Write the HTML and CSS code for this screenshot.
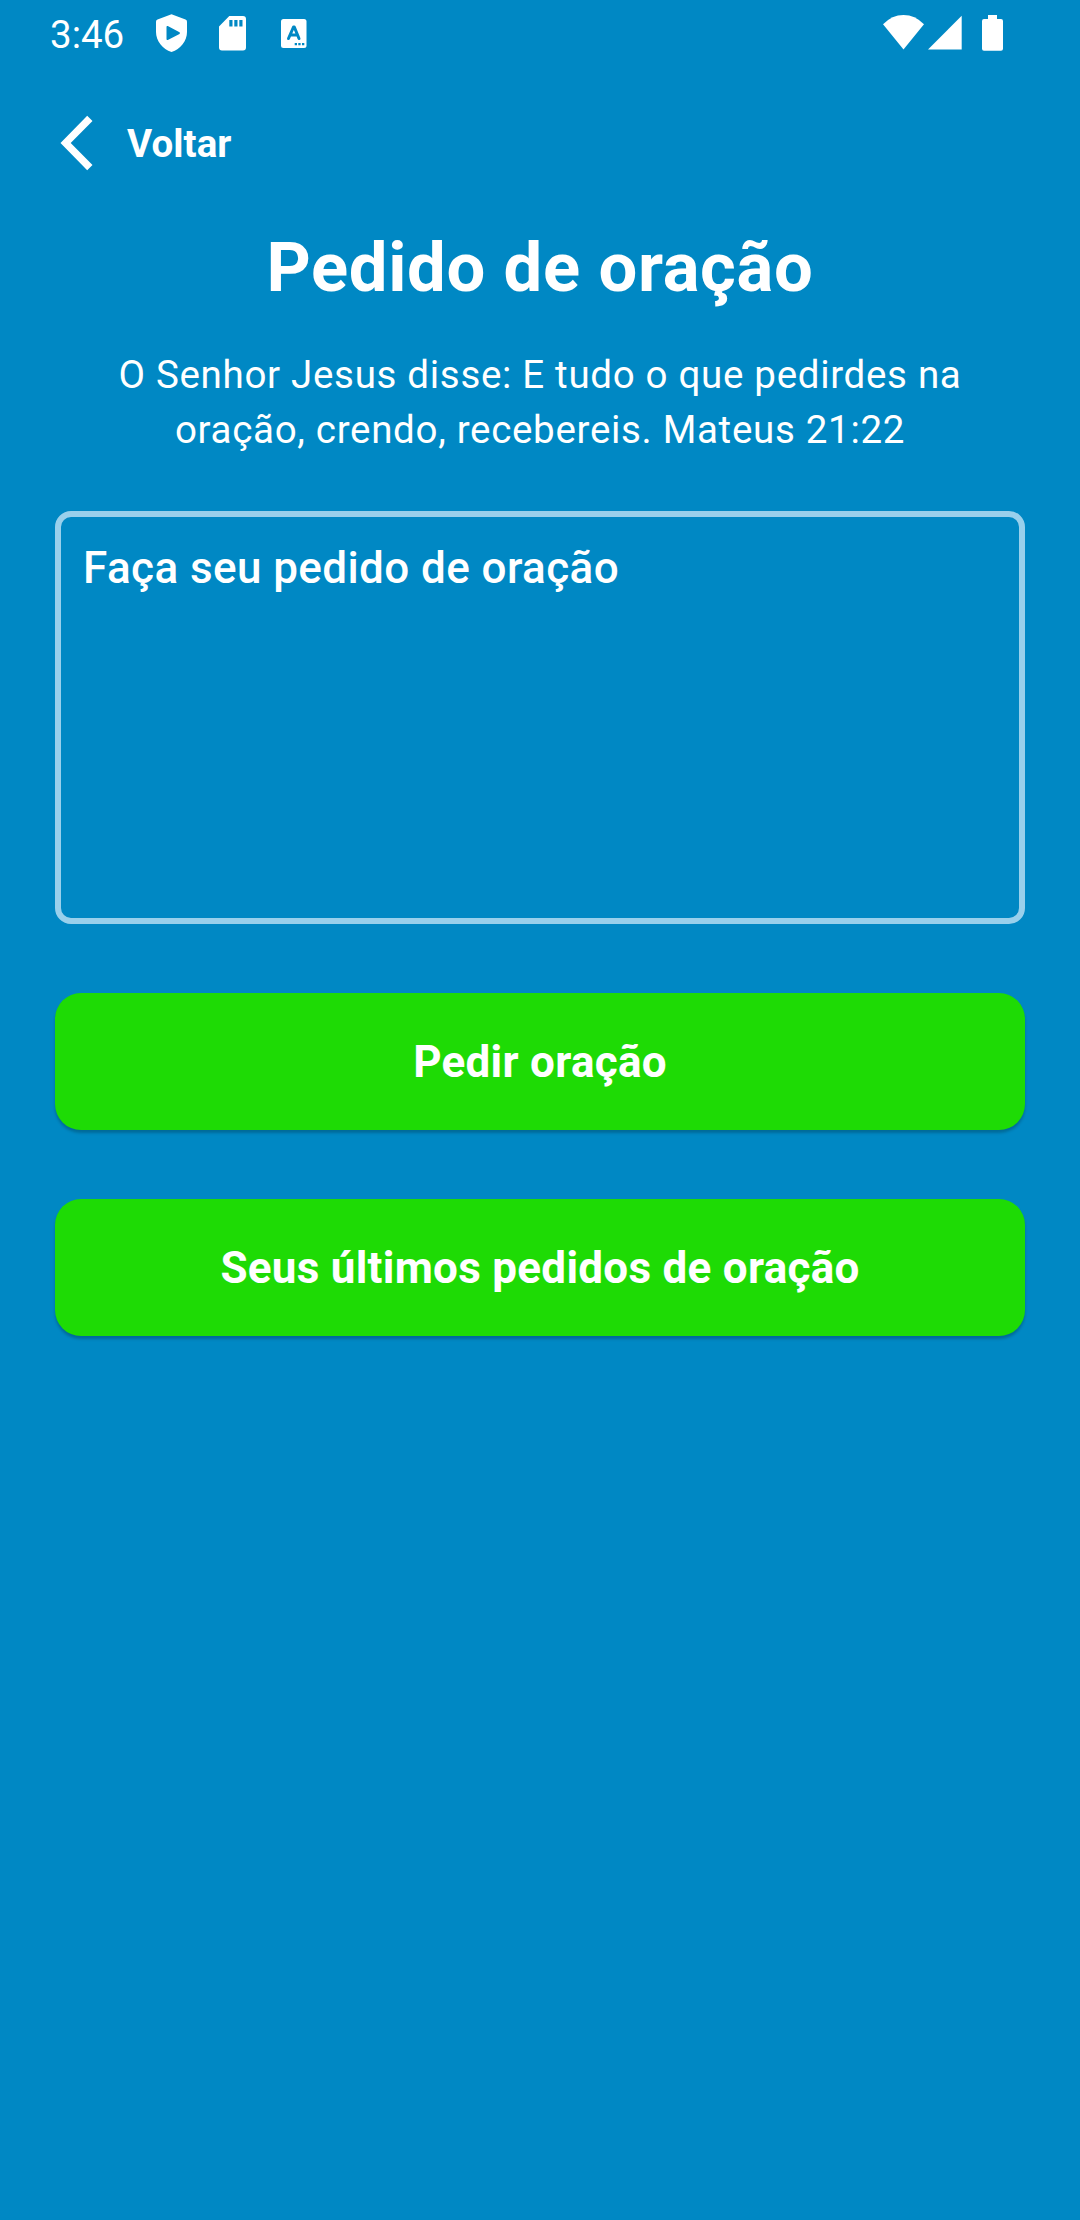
FILE: index.html
```html
<!DOCTYPE html>
<html lang="pt-BR">
<head>
    <meta charset="UTF-8">
    <meta name="viewport" content="width=device-width, initial-scale=1.0">
    <title>Pedido de oração</title>
    <link rel="stylesheet" href="styles.css">
</head>
<body>

<div class="status-bar">
    <span class="clock">3:46</span>
    <div class="status-icons">
        <svg class="shield" width="32" height="38" viewBox="0 0 32 38">
            <path fill="#fff" fill-rule="evenodd" d="M15.5 0.3 L29.5 5.5 Q31 6.1 31 7.8 V18 C31 27 24.5 35 15.5 38 C6.500 35 0 27 0 18 V7.800 Q0 6.100 1.500 5.500 Z M10.500 13 V25 Q10.500 26.500 11.800 25.900 L23.500 20 Q24.500 19 23.500 18.200 L11.800 12 Q10.500 11.500 10.500 13 Z"/>
        </svg>
        <svg class="sd-card" width="28" height="35" viewBox="0 0 28 35">
            <path fill="#fff" fill-rule="evenodd" d="M10.300 0 H24 Q27 0 27 3 V31.500 Q27 34.500 24 34.500 H3 Q0 34.500 0 31.500 V10.500 Z M10.300 4 V10.500 H13.500 V4 Z M15.300 4 V10.500 H18.500 V4 Z M20.300 4 V10.500 H23.500 V4 Z"/>
        </svg>
        <svg class="letter" width="26" height="30" viewBox="0 0 26 30">
            <rect fill="#fff" width="25.500" height="29" rx="2.500"/>
            <path fill="none" stroke="#0088c4" stroke-width="3" stroke-linecap="round" stroke-linejoin="round" d="M7.500 19.500 L12.500 8 H13.300 L18 19.500 M9.500 16 H16"/>
            <path fill="#0088c4" d="M13.700 24 H16 V26.300 H13.700 Z M17.300 24 H19.600 V26.300 H17.300 Z M21 24 H23.300 V26.300 H21 Z"/>
        </svg>
    </div>
    <div class="signal-icons">
        <svg class="wifi" width="42" height="35" viewBox="0 0 42 35">
            <path fill="#fff" d="M0 9.300 Q9 0 20.500 0 Q32 0 41 9.300 L20.500 34.500 Z"/>
        </svg>
        <svg class="cell" width="34" height="35" viewBox="0 0 34 35">
            <path fill="#fff" d="M33.700 0.700 V34.500 H0 Z"/>
        </svg>
        <svg class="battery" width="21" height="36" viewBox="0 0 21 36">
            <path fill="#fff" d="M6 0 H15 V4 H19 Q21 4 21 6 V33.700 Q21 35.700 19 35.700 H2 Q0 35.700 0 33.700 V6 Q0 4 2 4 H6 Z"/>
        </svg>
    </div>
</div>

<div class="back">
    <svg width="33" height="56" viewBox="0 0 33 56">
        <path fill="#fff" d="M0.500 28 L27.200 0.800 L32.500 6 L10.700 28 L32.500 50 L27.200 55.200 Z"/>
    </svg>
    <span>Voltar</span>
</div>

<div class="content">
    <h1>Pedido de oração</h1>
    <p class="verse">O Senhor Jesus disse: E tudo o que pedirdes na oração, crendo, recebereis. Mateus 21:22</p>
    <textarea class="request" placeholder="Faça seu pedido de oração"></textarea>
    <button class="btn">Pedir oração</button>
    <button class="btn">Seus últimos pedidos de oração</button>
</div>

</body>
</html>
```
FILE: styles.css
```css
* {
    box-sizing: border-box;
}
body {
    margin: 0;
    min-height: 2220px;
    background-color: #0088c4;
    color: #fff;
    font-family: Roboto, sans-serif;
}
svg {
    display: block;
}
.status-bar {
    display: flex;
    align-items: flex-start;
    height: 66px;
    padding: 0 77px 0 50px;
}
.clock {
    width: 106px;
    font-size: 38.5px;
    line-height: 69px;
}
.status-icons {
    display: flex;
    flex: 1;
}
.shield {
    margin-top: 14px;
}
.sd-card {
    margin: 16px 0 0 31px;
}
.letter {
    margin: 19px 0 0 34px;
}
.signal-icons {
    display: flex;
    padding-top: 15px;
}
.cell {
    margin: 0 20px 0 3px;
}
.back {
    display: flex;
    align-items: center;
    height: 154px;
    padding: 0 0 0 60px;
    gap: 34px;
    font-size: 38.5px;
    font-weight: 700;
    letter-spacing: 0.1px;
}
.content {
    display: flex;
    flex-direction: column;
    padding: 8px 55px 0;
}
h1 {
    margin: 0 0 39px;
    font-size: 68.75px;
    line-height: 80px;
    font-weight: 700;
    letter-spacing: 0.65px;
    text-align: center;
}
.verse {
    margin: 0 0 54px;
    padding: 0 55px;
    font-size: 38.5px;
    line-height: 55px;
    letter-spacing: 0.69px;
    text-align: center;
}
.request {
    height: 413px;
    margin-bottom: 69px;
    padding: 25px 22px;
    border: 6px solid #99d0ec;
    border-radius: 16px;
    background: none;
    color: #fff;
    font: 500 44px/52px Roboto, sans-serif;
    letter-spacing: 0.41px;
    resize: none;
    outline: none;
}
.request::placeholder {
    color: #fff;
    opacity: 1;
}
.btn {
    height: 137px;
    margin-bottom: 69px;
    padding: 0;
    border: none;
    border-radius: 26px;
    background-color: #1edb05;
    box-shadow: 0 3px 3px rgba(0, 0, 0, 0.22);
    color: #fff;
    font: 700 44px/52px Roboto, sans-serif;
    letter-spacing: 0.275px;
    cursor: pointer;
}
```
